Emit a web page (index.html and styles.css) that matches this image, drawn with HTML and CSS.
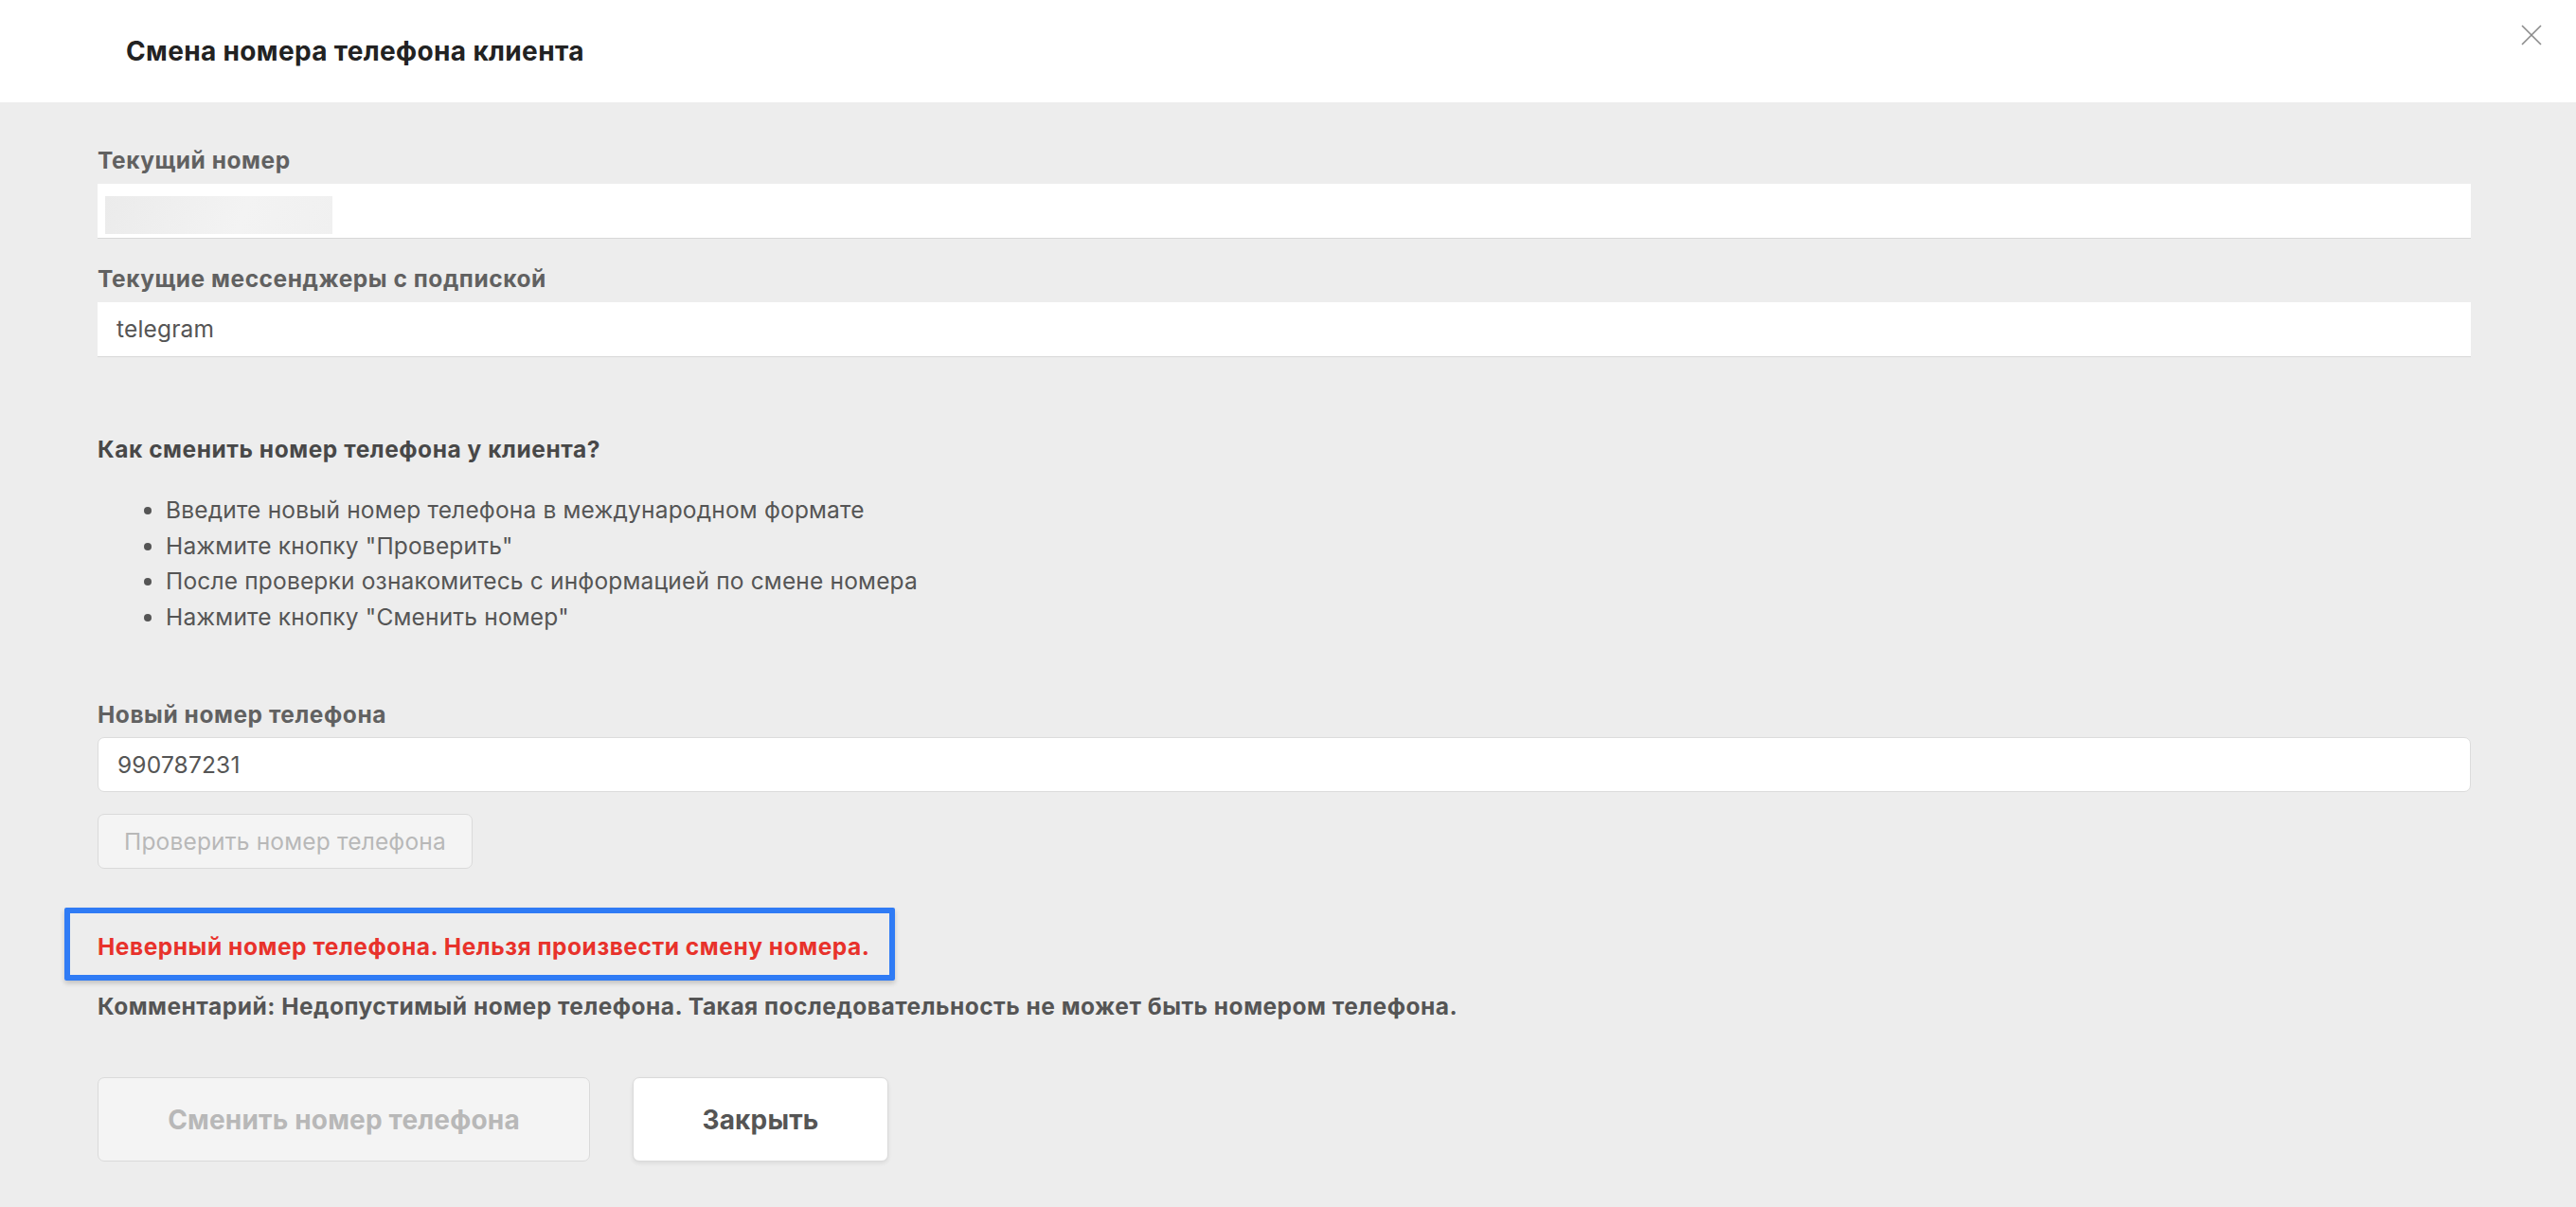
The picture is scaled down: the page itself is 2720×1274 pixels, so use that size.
FILE: index.html
```html
<!DOCTYPE html>
<html lang="ru">
<head>
    <meta charset="UTF-8">
    <meta name="viewport" content="width=device-width, initial-scale=1.0">
    <link rel="stylesheet" href="styles.css">
</head>
<body>
    <div class="modal">
        <div class="modal-header">
            <h2 class="modal-title">Смена номера телефона клиента</h2>
            <button class="close-btn" aria-label="Закрыть">
                <svg width="22" height="22" viewBox="0 0 22 22">
                    <path d="M1 1L21 21M21 1L1 21" stroke="#8a8a8a" stroke-width="1.6" fill="none"/>
                </svg>
            </button>
        </div>

        <div class="modal-body">
            <div class="field">
                <label class="field-label">Текущий номер</label>
                <div class="field-value readonly"><span class="skeleton"></span></div>
            </div>

            <div class="field">
                <label class="field-label">Текущие мессенджеры с подпиской</label>
                <div class="field-value readonly">telegram</div>
            </div>

            <div class="howto">
                <h3 class="howto-title">Как сменить номер телефона у клиента?</h3>
                <ul class="howto-list">
                    <li>Введите новый номер телефона в международном формате</li>
                    <li>Нажмите кнопку "Проверить"</li>
                    <li>После проверки ознакомитесь с информацией по смене номера</li>
                    <li>Нажмите кнопку "Сменить номер"</li>
                </ul>
            </div>

            <div class="field new-number">
                <label class="field-label" for="new-phone">Новый номер телефона</label>
                <input class="field-input" id="new-phone" type="text" value="990787231">
            </div>

            <button class="btn btn-check" disabled>Проверить номер телефона</button>

            <div class="error-box">
                <p class="error-text">Неверный номер телефона. Нельзя произвести смену номера.</p>
            </div>

            <p class="comment">Комментарий: Недопустимый номер телефона. Такая последовательность не может быть номером телефона.</p>

            <div class="actions">
                <button class="btn btn-big" disabled>Сменить номер телефона</button>
                <button class="btn btn-big btn-close">Закрыть</button>
            </div>
        </div>
    </div>
</body>
</html>
```

FILE: styles.css
```css
body {
    margin: 0;
    background-color: #ededed;
    font-family: 'Inter', 'Roboto', sans-serif;
    font-size: 24.5px;
    line-height: 35px;
    letter-spacing: 0.18px;
    color: #555;
}
.modal-header {
    height: 108px;
    background-color: #fff;
    display: flex;
    align-items: center;
    justify-content: space-between;
    padding: 0 34px 0 133px;
    position: relative;
}
.modal-title {
    margin: 0;
    font-size: 28px;
    font-weight: 700;
    letter-spacing: 0.35px;
    color: #222;
}
.close-btn {
    position: absolute;
    top: 26px;
    right: 36px;
    width: 22px;
    height: 22px;
    padding: 0;
    border: none;
    background: none;
    cursor: pointer;
}
.modal-body {
    padding: 44px 111px 40px 103px;
}
.field {
    margin-bottom: 25px;
}
.field-label {
    display: block;
    font-weight: 700;
    letter-spacing: 0.55px;
    color: #616161;
    margin-bottom: 7px;
}
.field-value {
    box-sizing: border-box;
    height: 58px;
    background-color: #fff;
    padding: 11px 20px;
    color: #555;
}
.readonly {
    border-bottom: 1px solid #d8d8d8;
}
.skeleton {
    display: block;
    width: 240px;
    height: 40px;
    margin: 2px 0 0 -12px;
    background: linear-gradient(110deg, #ebebeb 0%, #f3f3f3 60%, #f0f0f0 100%);
}
.howto {
    margin-top: 80px;
}
.howto-title {
    margin: 0;
    font-size: 24.5px;
    font-weight: 700;
    letter-spacing: 0.55px;
    color: #484848;
}
.howto-list {
    margin: 28px 0 0;
    padding-left: 72px;
    line-height: 37.5px;
    color: #555;
}
.new-number {
    margin-top: 67px;
    margin-bottom: 0;
}
.new-number .field-label {
    margin-bottom: 6px;
}
.field-input {
    display: block;
    box-sizing: border-box;
    width: 100%;
    height: 58px;
    padding: 0 20px;
    border: 1px solid #dcdcdc;
    border-radius: 7px;
    background-color: #fff;
    font-family: 'Inter', 'Roboto', sans-serif;
    font-size: 24.5px;
    letter-spacing: 0.18px;
    color: #555;
    outline: none;
}
.btn {
    font-family: 'Inter', 'Roboto', sans-serif;
    letter-spacing: 0.18px;
    border: 1px solid #dadada;
    border-radius: 7px;
    background-color: #f4f4f4;
    color: #b8b8b8;
    cursor: pointer;
}
.btn:disabled {
    cursor: default;
}
.btn-check {
    display: block;
    height: 58px;
    margin-top: 23px;
    padding: 0 27px;
    font-size: 24.5px;
}
.error-box {
    display: inline-block;
    margin: 41px 0 0 -35px;
    padding: 18px 20px 12px 29px;
    border: 6px solid #2f7bf5;
    border-radius: 2px;
    box-shadow: 0 3px 5px rgba(0, 0, 0, 0.18);
}
.error-text {
    margin: 0;
    font-weight: 700;
    letter-spacing: 0.55px;
    color: #e8322b;
}
.comment {
    margin: 10px 0 0;
    font-weight: 700;
    letter-spacing: 0.5px;
    color: #555;
}
.actions {
    display: flex;
    gap: 45px;
    margin-top: 57px;
}
.btn-big {
    height: 89px;
    width: 520px;
    font-size: 28px;
    font-weight: 700;
}
.btn-close {
    width: 270px;
    background-color: #fff;
    color: #555;
    box-shadow: 0 2px 4px rgba(0, 0, 0, 0.08);
}
```
